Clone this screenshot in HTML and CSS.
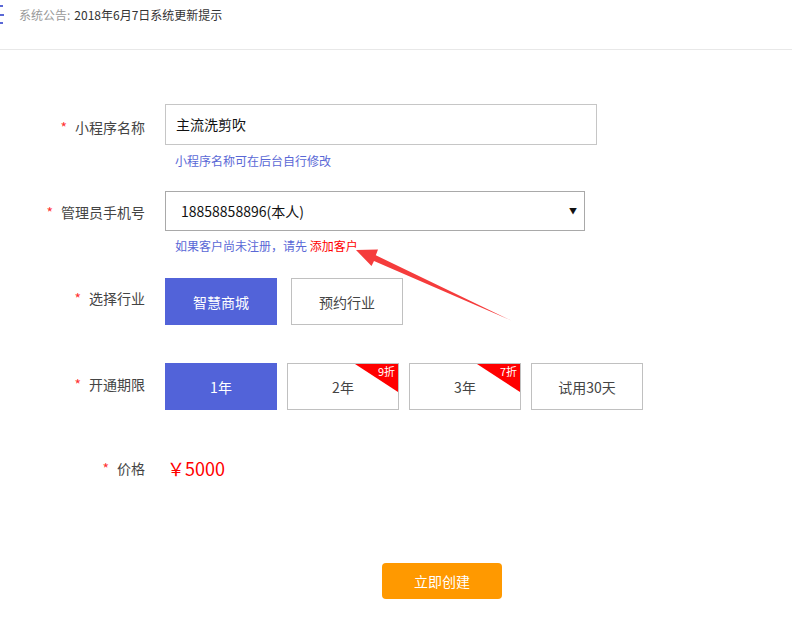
FILE: index.html
```html
<!DOCTYPE html>
<html lang="zh-CN">
<head>
<meta charset="utf-8">
<title>创建小程序</title>
<link rel="stylesheet" href="styles.css">
</head>
<body>
<div class="page">
  <header class="topbar">
    <svg class="menu-icon" width="8" height="26" viewBox="0 0 8 26">
      <rect x="0" y="4" width="3" height="2" fill="#5a68d6"/>
      <rect x="0" y="13" width="4" height="2" fill="#5a68d6"/>
      <rect x="0" y="21" width="3" height="2" fill="#5a68d6"/>
    </svg>
    <span class="notice-label">系统公告:</span>
    <span class="notice-text">2018年6月7日系统更新提示</span>
  </header>

  <main class="form">
    <div class="row row-name">
      <div class="label"><span class="star">*</span>小程序名称</div>
      <div class="field">
        <div class="input">主流洗剪吹</div>
        <div class="hint">小程序名称可在后台自行修改</div>
      </div>
    </div>

    <div class="row row-phone">
      <div class="label"><span class="star">*</span>管理员手机号</div>
      <div class="field">
        <div class="select"><span>18858858896(本人)</span><span class="caret">▼</span></div>
        <div class="hint">如果客户尚未注册，请先 <span class="link">添加客户</span></div>
      </div>
    </div>

    <div class="row row-industry">
      <div class="label"><span class="star">*</span>选择行业</div>
      <div class="field options gap14">
        <div class="opt active tall">智慧商城</div>
        <div class="opt tall">预约行业</div>
      </div>
    </div>

    <div class="row row-period">
      <div class="label"><span class="star">*</span>开通期限</div>
      <div class="field options gap10">
        <div class="opt active tall">1年</div>
        <div class="opt tall">2年<span class="ribbon"></span><span class="ribbon-text">9折</span></div>
        <div class="opt tall">3年<span class="ribbon"></span><span class="ribbon-text">7折</span></div>
        <div class="opt tall">试用30天</div>
      </div>
    </div>

    <div class="row row-price">
      <div class="label"><span class="star">*</span>价格</div>
      <div class="field price">￥5000</div>
    </div>

    <div class="submit-wrap">
      <button class="submit">立即创建</button>
    </div>
  </main>

  <svg class="arrow" width="792" height="643" viewBox="0 0 792 643">
    <polygon points="356,250 378,249.5 375.8,255.2 511,320.5 374,261 371.5,266" fill="#f53c3c"/>
  </svg>
</div>
</body>
</html>
```

FILE: styles.css
```css
* { box-sizing: border-box; }
html, body { margin: 0; padding: 0; background: #fff; }
body {
  font-family: "Noto Sans CJK SC", "Microsoft YaHei", sans-serif;
  color: #333;
  width: 792px;
  height: 643px;
  overflow: hidden;
}
.page { position: relative; width: 792px; height: 643px; }

.topbar {
  height: 50px;
  border-bottom: 1px solid #e8e8e8;
  display: flex;
  align-items: flex-start;
  padding-top: 6px;
  font-size: 12px;
  line-height: 18px;
}
.menu-icon { display: block; margin-top: -5px; margin-right: 11px; }
.notice-label { color: #999; margin-right: 4px; }
.notice-text { color: #333; }

.form { display: flex; flex-direction: column; }
.row { display: flex; align-items: flex-start; }
.label {
  width: 145px;
  text-align: right;
  font-size: 14px;
  line-height: 20px;
  color: #444;
  margin-right: 20px;
  padding-top: 11px;
  white-space: nowrap;
}
.star { color: #f33; margin-right: 8px; font-size: 14px; }

.row-name { margin-top: 54px; }
.row-name .label { padding-top: 13px; }
.row-phone { margin-top: 21px; }
.row-industry { margin-top: 23px; }
.row-industry .label { padding-top: 10px; }
.row-period { margin-top: 38px; }
.row-price { margin-top: 45px; }
.row-price .label { padding-top: 3px; }

.input {
  width: 432px;
  height: 41px;
  border: 1px solid #c6c6c6;
  font-size: 14px;
  line-height: 39px;
  padding-left: 10px;
  color: #111;
}
.select {
  width: 420px;
  height: 40px;
  border: 1px solid #a9a9a9;
  font-size: 14px;
  line-height: 38px;
  padding-left: 15px;
  padding-right: 7px;
  color: #111;
  display: flex;
  justify-content: space-between;
}
.caret { font-size: 8px; color: #111; }
.hint {
  font-size: 12px;
  line-height: 18px;
  color: #5a68d6;
  margin-top: 7px;
  padding-left: 10px;
}
.row-phone .hint { margin-top: 6px; }
.link { color: #f00; }

.options { display: flex; }
.gap14 { gap: 14px; }
.gap10 { gap: 10px; }
.opt {
  position: relative;
  width: 112px;
  height: 47px;
  border: 1px solid #c0c0c0;
  display: flex;
  align-items: center;
  justify-content: center;
  font-size: 14px;
  color: #444;
  overflow: hidden;
}
.opt.active {
  background: #5263d9;
  border-color: #5263d9;
  color: #fff;
}
.ribbon {
  position: absolute;
  top: 0;
  right: 0;
  width: 43px;
  height: 28px;
  background: #f00;
  clip-path: polygon(0 0, 100% 0, 100% 100%);
}
.ribbon-text {
  position: absolute;
  top: 0;
  right: 3px;
  font-size: 11px;
  line-height: 14px;
  color: #fff;
}

.price {
  font-size: 18px;
  line-height: 26px;
  color: #f00;
  padding-left: 2px;
}

.submit-wrap {
  margin-top: 82px;
  padding-left: 382px;
}
.submit {
  width: 120px;
  height: 36px;
  border: none;
  border-radius: 4px;
  background: #ff9900;
  color: #fff;
  font-family: "Noto Sans CJK SC", sans-serif;
  font-size: 14px;
  cursor: pointer;
}

.arrow { position: absolute; left: 0; top: 0; pointer-events: none; }
```
